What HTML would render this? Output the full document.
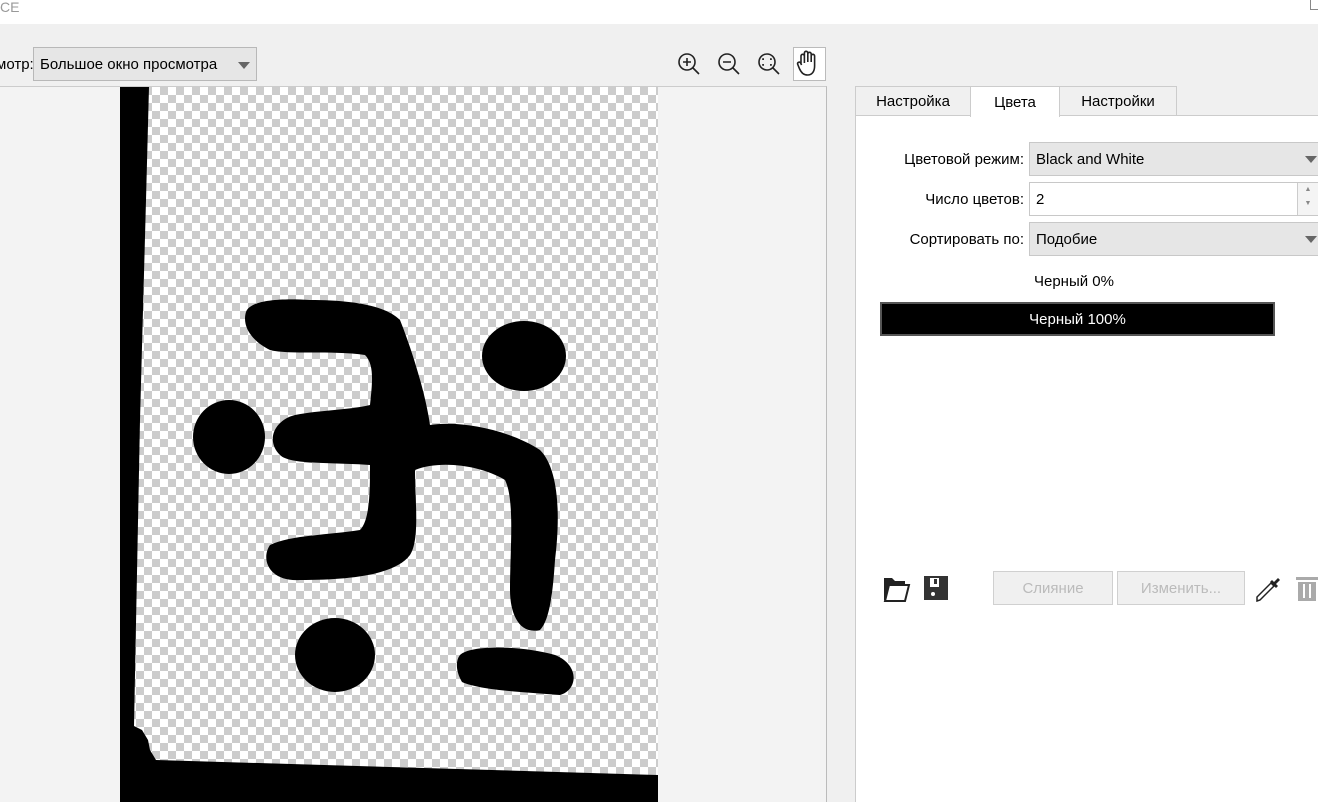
<!DOCTYPE html>
<html><head><meta charset="utf-8"><style>
*{margin:0;padding:0;box-sizing:border-box}
body{width:1318px;height:802px;overflow:hidden;background:#f0f0f0;font-family:"Segoe UI","Liberation Sans",sans-serif;font-size:15px;color:#000;position:relative}
.abs{position:absolute}
.checker{background-color:#fff;background-image:linear-gradient(45deg,#ccc 25%,transparent 25%,transparent 75%,#ccc 75%),linear-gradient(45deg,#ccc 25%,transparent 25%,transparent 75%,#ccc 75%);background-size:16px 16px;background-position:0 0,8px 8px}
.lbl{position:absolute;text-align:right;width:170px;left:854px}
.fld{position:absolute;left:1029px;width:300px;height:34px;border:1px solid #c8c8c8;background:#e6e6e6;padding:8px 6px 0;font-size:15px}
.btn{position:absolute;top:571px;height:34px;border:1px solid #d0d0d0;background:#f0f0f0;color:#bbb;text-align:center;line-height:33px}
</style></head><body>
<div class="abs" style="left:0;top:0;width:1318px;height:24px;background:#fff"></div>
<div class="abs" style="left:0;top:-1px;color:#999;font-size:14px">CE</div>
<div class="abs" style="left:1310px;top:0;width:8px;height:10px;border-left:1px solid #888;border-bottom:1px solid #888"></div>

<div class="abs" style="left:-4px;top:56px;font-size:15px">мотр:</div>
<div class="abs" style="left:33px;top:47px;width:224px;height:34px;border:1px solid #b8b8b8;background:#e6e6e6;padding:8px 6px 0">Большое окно просмотра<div class="abs" style="right:6px;top:14px;border-left:6px solid transparent;border-right:6px solid transparent;border-top:7px solid #666"></div></div>

<svg class="abs" style="left:674px;top:46px" width="156" height="36" viewBox="0 -4 156 36" fill="none" stroke="#222" stroke-width="1.6">
<circle cx="13" cy="12" r="8"/><path d="M19 18l6 6M9 12h8M13 8v8"/>
<circle cx="53" cy="12" r="8"/><path d="M59 18l6 6M49 12h8"/>
<circle cx="93" cy="12" r="8"/><path d="M99 18l6 6"/><path d="M89 10v-1h1M96 9h1v1M97 14v1h-1M90 15h-1v-1"/>
<rect x="119.5" y="-2.5" width="32" height="33" stroke="#bbb" stroke-width="1" fill="#fff"/>
<path d="M127 14V6a1.7 1.7 0 013.4 0v7M130.4 12V3a1.7 1.7 0 013.4 0v9M133.8 12V4a1.7 1.7 0 013.4 0v8M137.2 12V6a1.7 1.7 0 013.4 0v10c0 6-3 9-7 9s-6-2-8-6l-2-5a1.6 1.6 0 013-1l1 2"/>
</svg>

<div class="abs" style="left:0;top:86px;width:827px;height:716px;border-right:1px solid #bbb;border-top:1px solid #ccc;background:#f3f3f3"></div>
<div class="abs checker" style="left:120px;top:87px;width:538px;height:715px"></div>
<svg class="abs" style="left:0;top:0" width="1318" height="802">
<path d="M120 87H149L146 200L140 420L134 726L142 730L148 740L150 750L156 760L658 775V802H120Z" fill="#000"/>
<g fill="#000">
<path d="M246 312C250 300 280 298 310 300C350 300 385 305 400 320C410 345 425 390 430 425C460 420 510 430 540 450C560 470 560 520 555 560C553 590 550 620 540 630C520 635 510 615 510 590C510 550 515 500 505 480C480 465 440 460 415 470C415 500 420 540 410 555C395 575 350 580 300 580C270 582 260 560 270 545C290 535 330 535 360 530C370 520 370 490 370 465C330 462 290 465 280 455C265 440 275 420 295 415C320 410 350 410 370 405C372 385 375 365 365 355C330 350 290 355 270 350C250 340 242 325 246 312Z"/>
<ellipse cx="524" cy="356" rx="42" ry="35"/>
<ellipse cx="229" cy="437" rx="36" ry="37"/>
<ellipse cx="335" cy="655" rx="40" ry="37"/>
<path d="M460 655C470 645 520 645 555 655C580 665 578 690 560 695C520 692 480 690 462 682C455 670 456 660 460 655Z"/>
</g>
</svg>

<div class="abs" style="left:855px;top:86px;width:116px;height:30px;border:1px solid #ccc;background:#f0f0f0;text-align:center;line-height:30px">Настройка</div>
<div class="abs" style="left:1059px;top:86px;width:118px;height:30px;border:1px solid #ccc;background:#f0f0f0;text-align:center;line-height:30px">Настройки</div>
<div class="abs" style="left:855px;top:115px;width:463px;height:687px;background:#fff;border-left:1px solid #ccc;border-top:1px solid #ccc"></div>
<div class="abs" style="left:970px;top:86px;width:90px;height:31px;border:1px solid #ccc;border-bottom:none;background:#fff;text-align:center;line-height:31px">Цвета</div>

<div class="lbl" style="top:151px">Цветовой режим:</div>
<div class="fld" style="top:142px">Black and White</div>
<div class="lbl" style="top:191px">Число цветов:</div>
<div class="fld" style="top:182px;background:#fff">2</div>
<div class="abs" style="left:1297px;top:183px;width:21px;height:32px;border-left:1px solid #ccc;background:#f4f4f4;font-size:7px;color:#888;text-align:center;line-height:14px">▲<br>▼</div>
<div class="lbl" style="top:231px">Сортировать по:</div>
<div class="fld" style="top:222px">Подобие</div>
<div class="abs" style="left:1305px;top:156px;border-left:6px solid transparent;border-right:6px solid transparent;border-top:7px solid #666"></div>
<div class="abs" style="left:1305px;top:236px;border-left:6px solid transparent;border-right:6px solid transparent;border-top:7px solid #666"></div>

<div class="abs" style="left:1034px;top:273px">Черный 0%</div>
<div class="abs" style="left:880px;top:302px;width:395px;height:34px;background:#000;border:2px solid #555;color:#fff;text-align:center;line-height:32px">Черный 100%</div>

<svg class="abs" style="left:882px;top:574px" width="70" height="30">
<path d="M2 4h8l3 3h10v4H7L4 26H2Z" fill="#222"/><path d="M7 11h20l-4 16H3Z" fill="#fff" stroke="#222" stroke-width="2"/>
<rect x="42" y="2" width="24" height="24" fill="#333"/><rect x="48" y="4" width="9" height="9" fill="#fff"/><rect x="52" y="5" width="3" height="5" fill="#333"/><circle cx="51" cy="20" r="2" fill="#fff"/>
</svg>
<div class="btn" style="left:993px;width:120px">Слияние</div>
<div class="btn" style="left:1117px;width:128px">Изменить...</div>
<svg class="abs" style="left:1254px;top:574px" width="64" height="30">
<path d="M3 27l3-1 14-14-3-3L3 23Z" fill="#fff" stroke="#222" stroke-width="1.5"/><path d="M16 8l6 6 2-2-2-2 4-4-2-2-4 4-2-2Z" fill="#222"/>
<rect x="42" y="3" width="22" height="3" fill="#aaa"/><rect x="44" y="8" width="18" height="19" fill="#aaa"/><rect x="49" y="10" width="2" height="14" fill="#fff"/><rect x="55" y="10" width="2" height="14" fill="#fff"/>
</svg>
</body></html>
